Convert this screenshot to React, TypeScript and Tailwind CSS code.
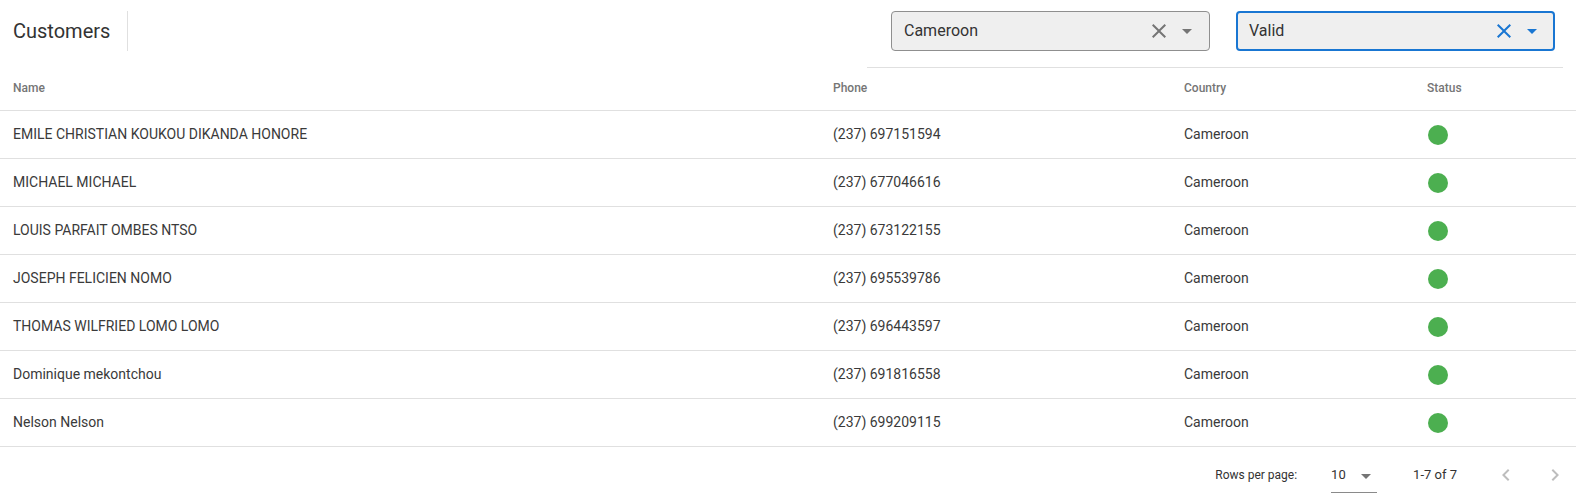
import React from "react";

type Customer = {
  name: string;
  phone: string;
  country: string;
  valid: boolean;
};

const customers: Customer[] = [
  { name: "EMILE CHRISTIAN KOUKOU DIKANDA HONORE", phone: "(237) 697151594", country: "Cameroon", valid: true },
  { name: "MICHAEL MICHAEL", phone: "(237) 677046616", country: "Cameroon", valid: true },
  { name: "LOUIS PARFAIT OMBES NTSO", phone: "(237) 673122155", country: "Cameroon", valid: true },
  { name: "JOSEPH FELICIEN NOMO", phone: "(237) 695539786", country: "Cameroon", valid: true },
  { name: "THOMAS WILFRIED LOMO LOMO", phone: "(237) 696443597", country: "Cameroon", valid: true },
  { name: "Dominique mekontchou", phone: "(237) 691816558", country: "Cameroon", valid: true },
  { name: "Nelson Nelson", phone: "(237) 699209115", country: "Cameroon", valid: true },
];

const CloseIcon = ({ className }: { className?: string }) => (
  <svg viewBox="0 0 24 24" className={className} fill="currentColor">
    <path d="M19 6.41 17.59 5 12 10.59 6.41 5 5 6.41 10.59 12 5 17.59 6.41 19 12 13.41 17.59 19 19 17.59 13.41 12z" />
  </svg>
);

const DropIcon = ({ className }: { className?: string }) => (
  <svg viewBox="0 0 24 24" className={className} fill="currentColor">
    <path d="M7 10l5 5 5-5z" />
  </svg>
);

const ChevronLeft = ({ className }: { className?: string }) => (
  <svg viewBox="0 0 24 24" className={className} fill="currentColor">
    <path d="M15.41 7.41 14 6l-6 6 6 6 1.41-1.41L10.83 12z" />
  </svg>
);

const ChevronRight = ({ className }: { className?: string }) => (
  <svg viewBox="0 0 24 24" className={className} fill="currentColor">
    <path d="M10 6 8.59 7.41 13.17 12l-4.58 4.59L10 18l6-6z" />
  </svg>
);

function FilterSelect({ value, focused }: { value: string; focused?: boolean }) {
  return (
    <div
      className={
        focused
          ? "flex items-center h-[40px] w-[319px] rounded-[4px] bg-[#efefef] border-2 border-[#1976d2] pl-[11px] pr-[9px]"
          : "flex items-center h-[40px] w-[319px] rounded-[4px] bg-[#efefef] border border-[#8f8f8f] pl-[12px] pr-[10px]"
      }
    >
      <span className="flex-1 text-[16px] text-[#333]">{value}</span>
      <CloseIcon
        className={focused ? "w-[24px] h-[24px] text-[#1976d2]" : "w-[24px] h-[24px] text-[#757575]"}
      />
      <DropIcon
        className={
          focused ? "w-[24px] h-[24px] ml-[4px] text-[#1976d2]" : "w-[24px] h-[24px] ml-[4px] text-[#757575]"
        }
      />
    </div>
  );
}

const cols = "grid grid-cols-[820px_351px_243px_1fr]";

export default function App() {
  return (
    <div className="w-[1576px] h-[503px] bg-white text-[#333] font-['Roboto',sans-serif] overflow-hidden">
      {/* toolbar */}
      <div className="flex h-[68px]">
        <div className="flex items-center h-[40px] mt-[11px] pl-[13px]">
          <h2 className="text-[20px] text-[#333] leading-none">Customers</h2>
          <div className="w-px h-[40px] bg-[#e0e0e0] ml-[17px]" />
        </div>
        <div className="ml-auto mr-[13px] w-[696px] flex justify-end gap-[26px] pt-[11px] pr-[8px] border-b border-[#e0e0e0]">
          <FilterSelect value="Cameroon" />
          <FilterSelect value="Valid" focused />
        </div>
      </div>

      {/* header */}
      <div className={`${cols} h-[43px] pb-[3px] border-b border-[#e0e0e0] items-center text-[12px] font-medium text-[#757575]`}>
        <div className="pl-[13px]">Name</div>
        <div className="pl-[13px]">Phone</div>
        <div className="pl-[13px]">Country</div>
        <div className="pl-[13px]">Status</div>
      </div>

      {/* rows */}
      {customers.map((c) => (
        <div
          key={c.phone}
          className={`${cols} h-[48px] border-b border-[#e0e0e0] items-center text-[14px] text-[#3a3a3a]`}
        >
          <div className="pl-[13px]">{c.name}</div>
          <div className="pl-[13px]">{c.phone}</div>
          <div className="pl-[13px]">{c.country}</div>
          <div className="pl-[14px]">
            <div className={c.valid ? "w-[20px] h-[20px] rounded-full bg-[#4caf50]" : "w-[20px] h-[20px] rounded-full bg-[#f44336]"} />
          </div>
        </div>
      ))}

      {/* pagination */}
      <div className="flex items-center justify-end h-[56px] text-[#333]">
        <span className="text-[12px]">Rows per page:</span>
        <div className="relative ml-[34px] w-[46px] h-[32px] flex items-center border-b border-[#8a8a8a] mt-[3px]">
          <span className="text-[13px] pb-[2px]">10</span>
          <DropIcon className="w-[24px] h-[24px] ml-auto -mr-[1px] text-[#757575]" />
        </div>
        <span className="ml-[36px] text-[13px]">1-7 of 7</span>
        <ChevronLeft className="ml-[37px] w-[24px] h-[24px] text-[#bdbdbd]" />
        <ChevronRight className="ml-[25px] mr-[9px] w-[24px] h-[24px] text-[#bdbdbd]" />
      </div>
    </div>
  );
}
